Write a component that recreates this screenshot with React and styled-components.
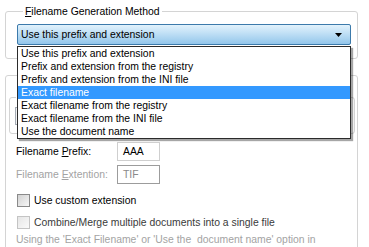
import React from "react";
import styled, { createGlobalStyle } from "styled-components";

const GlobalStyle = createGlobalStyle`
  html, body {
    margin: 0;
    padding: 0;
    background: #fff;
  }
  body {
    font-family: "Liberation Sans", Arial, sans-serif;
    font-size: 10.4px;
    color: #000;
  }
`;

const Page = styled.div`
  width: 369px;
  height: 247px;
  overflow: hidden;
  box-sizing: border-box;
  padding: 5px 0 0 5px;
  background: #fff;
`;

const GroupBox = styled.fieldset`
  box-sizing: border-box;
  width: ${(p) => p.$width || 353}px;
  margin: ${(p) => p.$margin || "0"};
  padding: ${(p) => p.$padding || "0"};
  border: 1px solid #d4d4d4;
  border-radius: 3px;
  min-width: 0;
`;

const Legend = styled.legend`
  padding: 0 2px;
  margin-left: 6px;
  line-height: 13px;
  color: #000;
`;

const Mnemonic = styled.span`
  text-decoration: underline;
`;

const ComboWrap = styled.div`
  position: relative;
  width: 334px;
`;

const Combo = styled.div`
  box-sizing: border-box;
  height: 21px;
  display: flex;
  align-items: center;
  justify-content: space-between;
  padding: 0 8px 0 3px;
  border: 1px solid #3c7aab;
  border-radius: 2px;
  background: linear-gradient(to bottom, #e2f2fc 0%, #bfdff5 45%, #93c6eb 100%);
`;

const Arrow = styled.svg`
  display: block;
`;

const DropList = styled.ul`
  position: absolute;
  top: 100%;
  left: 0;
  z-index: 2;
  box-sizing: border-box;
  width: 334px;
  margin: 1px 0 0;
  padding: 0;
  list-style: none;
  background: #fff;
  border: 1px solid #2b2b2b;
  box-shadow: 2px 2px 1px rgba(0, 0, 0, 0.35);
`;

const DropItem = styled.li`
  height: 13px;
  line-height: 13px;
  padding-left: 3px;
  white-space: nowrap;
  background: ${(p) => (p.$active ? "#3399ff" : "transparent")};
  color: ${(p) => (p.$active ? "#fff" : "#000")};
`;

const InnerBox = styled.div`
  box-sizing: border-box;
  width: 180px;
  height: 18px;
  margin-left: 5px;
  border: 1px solid #a5acb5;
  background: #f4f4f4;
`;

const FieldRow = styled.div`
  display: flex;
  align-items: center;
  height: 19px;
  margin-top: ${(p) => p.$top || 0}px;
`;

const Label = styled.label`
  width: 101px;
  color: ${(p) => (p.$disabled ? "#a3a3a3" : "#000")};
  white-space: nowrap;
`;

const TextBox = styled.div`
  box-sizing: border-box;
  width: 43px;
  height: 19px;
  display: flex;
  align-items: center;
  padding-left: 5px;
  border: 1px solid ${(p) => (p.$disabled ? "#9c9c9c" : "#cfcfcf")};
  color: ${(p) => (p.$disabled ? "#8a8a8a" : "#000")};
  background: #fff;
`;

const CheckRow = styled.div`
  display: flex;
  align-items: center;
  gap: 4px;
  height: 13px;
  margin: ${(p) => p.$margin || "0"};
  color: ${(p) => (p.$disabled ? "#3a3a3a" : "#000")};
  white-space: nowrap;
`;

const CheckBox = styled.span`
  box-sizing: border-box;
  width: 13px;
  height: 13px;
  flex: none;
  border: 1px solid ${(p) => (p.$disabled ? "#c4c4c4" : "#8a8a8a")};
  background: ${(p) =>
    p.$disabled
      ? "linear-gradient(135deg, #e6e6e6, #fafafa)"
      : "linear-gradient(135deg, #d2d2d2, #f7f7f7)"};
`;

const Note = styled.p`
  margin: 3px 0 0;
  line-height: 15px;
  color: #a3a3a3;
  white-space: pre;
`;

const options = [
  "Use this prefix and extension",
  "Prefix and extension from the registry",
  "Prefix and extension from the INI file",
  "Exact filename",
  "Exact filename from the registry",
  "Exact filename from the INI file",
  "Use the document name",
];

export default function App() {
  return (
    <>
      <GlobalStyle />
      <Page>
        <GroupBox $padding="6px 0 13px 11px">
          <Legend>
            <Mnemonic>F</Mnemonic>ilename Generation Method
          </Legend>
          <ComboWrap>
            <Combo>
              <span>Use this prefix and extension</span>
              <Arrow width="7" height="4" viewBox="0 0 7 4">
                <path d="M0 0h7L3.5 4z" fill="#000" />
              </Arrow>
            </Combo>
            <DropList>
              {options.map((o) => (
                <DropItem key={o} $active={o === "Exact filename"}>
                  {o}
                </DropItem>
              ))}
            </DropList>
          </ComboWrap>
        </GroupBox>

        <GroupBox $margin="10px 0 0" $padding="9px 0 0 10px">
          <Legend>
            <Mnemonic>F</Mnemonic>ile Naming
          </Legend>
          <GroupBox $width={346} $margin="0 0 0 -7px" $padding="3px 0 8px 0">
            <Legend>
              <Mnemonic>E</Mnemonic>xact Filename
            </Legend>
            <InnerBox />
          </GroupBox>
          <FieldRow $top={8}>
            <Label>
              Filename <Mnemonic>P</Mnemonic>refix:
            </Label>
            <TextBox>AAA</TextBox>
          </FieldRow>
          <FieldRow $top={4}>
            <Label $disabled>
              Filename <Mnemonic>E</Mnemonic>xtention:
            </Label>
            <TextBox $disabled>TIF</TextBox>
          </FieldRow>
          <CheckRow $margin="10px 0 0 1px">
            <CheckBox />
            <span>Use custom extension</span>
          </CheckRow>
          <CheckRow $margin="9px 0 0 1px" $disabled>
            <CheckBox $disabled />
            <span>Combine/Merge multiple documents into a single file</span>
          </CheckRow>
          <Note>
            {"Using the 'Exact Filename' or 'Use the  document name' option in\ncombination with the 'Combine' option will merge files into a single one"}
          </Note>
        </GroupBox>
      </Page>
    </>
  );
}
